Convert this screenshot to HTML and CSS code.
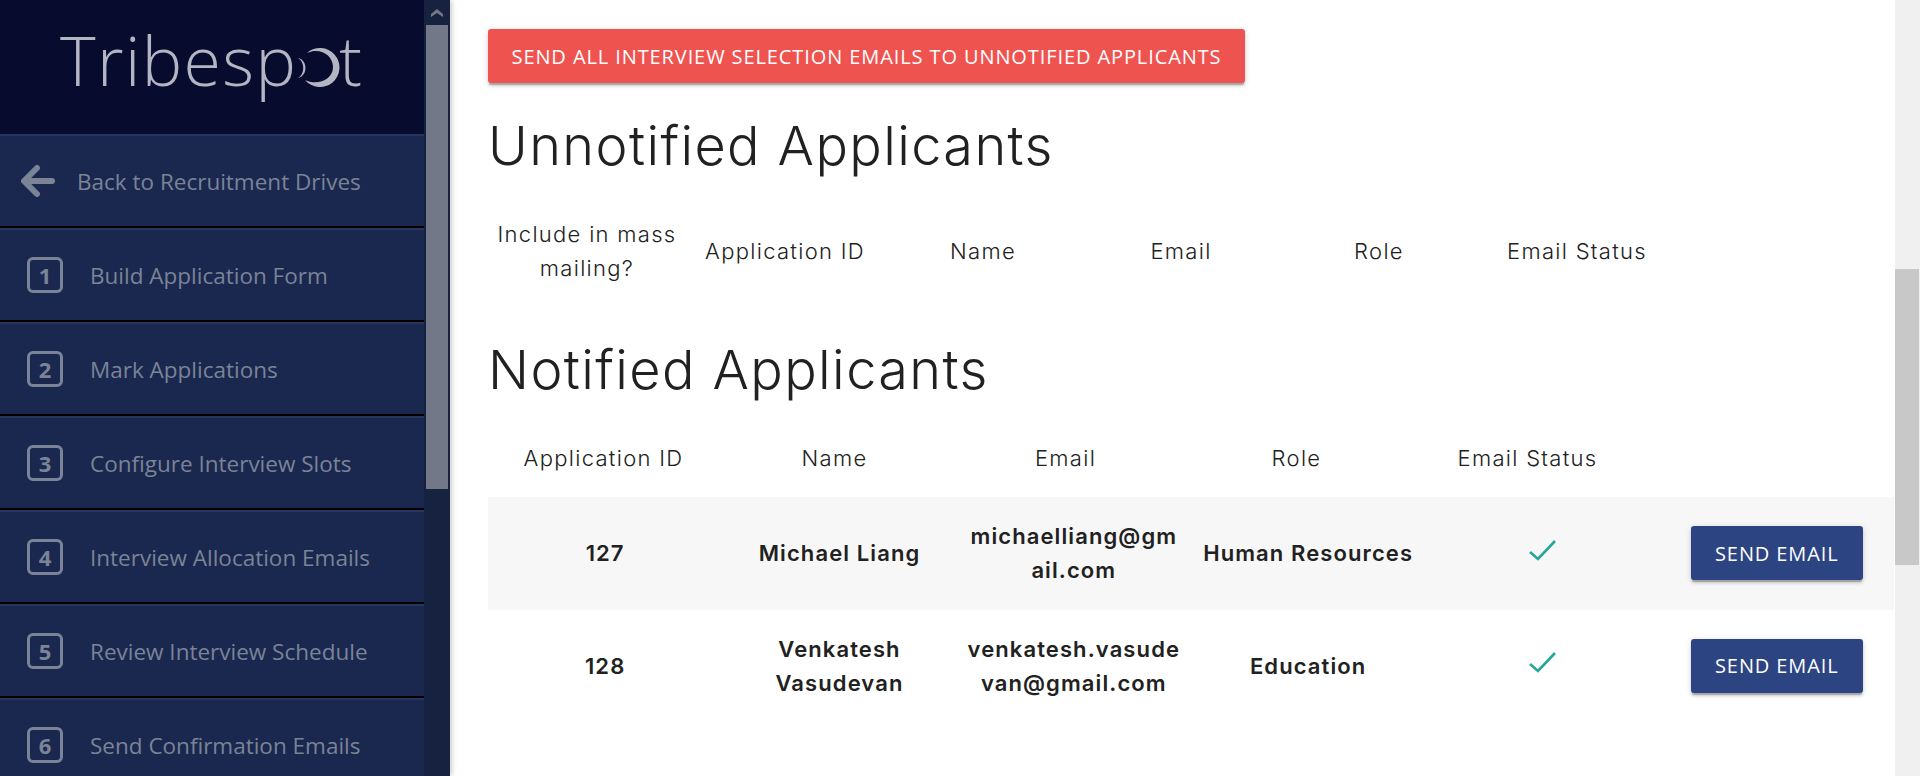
FILE: index.html
```html
<!DOCTYPE html>
<html lang="en">
<head>
    <meta charset="UTF-8">
    <title>Tribespot</title>
    <link rel="stylesheet" href="styles.css">
</head>
<body>
    <aside class="sidebar">
        <nav class="nav">
            <div class="logo">
                <span>Tribesp</span>
                <svg class="logo-moon" viewBox="0 0 44 44">
                    <path fill="currentColor" d="M11 7A19.5 19.5 0 1 1 9 34C21 40 37 34 37 21C37 9 24 1 11 7Z" />
                    <path fill="currentColor" d="M2 12C9 16 9 28 2 32C12 30 12 14 2 12Z" />
                </svg>
                <span>t</span>
            </div>
            <a class="nav-item nav-back">
                <svg class="back-arrow" viewBox="0 0 34 34">
                    <path fill="none" stroke="currentColor" stroke-width="6" stroke-linecap="round" stroke-linejoin="round" d="M31 17H4M16 4L3 17L16 30" />
                </svg>
                Back to Recruitment Drives
            </a>
            <a class="nav-item"><span class="step">1</span>Build Application Form</a>
            <a class="nav-item"><span class="step">2</span>Mark Applications</a>
            <a class="nav-item"><span class="step">3</span>Configure Interview Slots</a>
            <a class="nav-item"><span class="step">4</span>Interview Allocation Emails</a>
            <a class="nav-item"><span class="step">5</span>Review Interview Schedule</a>
            <a class="nav-item"><span class="step">6</span>Send Confirmation Emails</a>
        </nav>
        <div class="side-scroll">
            <svg class="side-scroll-up" viewBox="0 0 12 8">
                <path fill="currentColor" d="M6 0L12 5V8L6 4L0 8V5Z" />
            </svg>
            <div class="side-scroll-thumb"></div>
        </div>
    </aside>

    <main class="content">
        <button class="btn btn-red">Send all interview selection emails to unnotified applicants</button>

        <h2 class="heading heading-first">Unnotified Applicants</h2>
        <div class="head-row head-row-seven">
            <div>Include in mass<br>mailing?</div>
            <div>Application ID</div>
            <div>Name</div>
            <div>Email</div>
            <div>Role</div>
            <div>Email Status</div>
        </div>

        <h2 class="heading heading-second">Notified Applicants</h2>
        <div class="head-row head-row-six">
            <div>Application ID</div>
            <div>Name</div>
            <div>Email</div>
            <div>Role</div>
            <div>Email Status</div>
        </div>

        <div class="row row-odd">
            <div>127</div>
            <div>Michael Liang</div>
            <div>michaelliang@gm<br>ail.com</div>
            <div>Human Resources</div>
            <div class="status">
                <svg class="check" viewBox="0 0 28 22">
                    <path fill="none" stroke="currentColor" stroke-width="2.6" d="M1 12L9 19L26 1" />
                </svg>
            </div>
            <div><button class="btn btn-blue">Send email</button></div>
        </div>
        <div class="row">
            <div>128</div>
            <div>Venkatesh<br>Vasudevan</div>
            <div>venkatesh.vasude<br>van@gmail.com</div>
            <div>Education</div>
            <div class="status">
                <svg class="check" viewBox="0 0 28 22">
                    <path fill="none" stroke="currentColor" stroke-width="2.6" d="M1 12L9 19L26 1" />
                </svg>
            </div>
            <div><button class="btn btn-blue">Send email</button></div>
        </div>
    </main>

    <div class="page-scroll">
        <div class="page-scroll-thumb"></div>
    </div>
</body>
</html>
```

FILE: styles.css
```css
html, body {
    height: 100%;
}
body {
    margin: 0;
    display: flex;
    overflow: hidden;
    background-color: #fff;
    color: #212121;
    font-family: 'Inter', 'Liberation Sans', sans-serif;
}
.sidebar {
    width: 450px;
    flex-shrink: 0;
    display: flex;
    background-color: #172140;
    box-shadow: 2px 0 5px rgba(0, 0, 0, 0.2);
    overflow: hidden;
}
.nav {
    width: 424px;
    flex-shrink: 0;
    font-family: 'Open Sans', sans-serif;
    color: #7b8396;
}
.logo {
    height: 134px;
    box-sizing: border-box;
    padding: 13px 0 0 60px;
    display: flex;
    align-items: flex-start;
    background-color: #070b2e;
    color: #b4b5c3;
    font-size: 68px;
    font-weight: 300;
    letter-spacing: 1.4px;
    line-height: 94px;
}
.logo-moon {
    width: 44px;
    height: 44px;
    margin: 33px -1px 0 -1px;
    flex-shrink: 0;
}
.nav-item {
    height: 94px;
    box-sizing: border-box;
    display: flex;
    align-items: center;
    padding-left: 27px;
    background-color: #1a2850;
    border-top: 2px solid #26365f;
    border-bottom: 2px solid #000;
    font-size: 22.5px;
}
.nav-back {
    padding-left: 21px;
}
.back-arrow {
    width: 34px;
    height: 34px;
    margin-right: 22px;
}
.step {
    width: 36px;
    height: 36px;
    box-sizing: border-box;
    margin-right: 27px;
    border: 3px solid #7b8396;
    border-radius: 6px;
    display: flex;
    align-items: center;
    justify-content: center;
    font-size: 22px;
    font-weight: 700;
}
.side-scroll {
    flex: 1;
    padding: 0 2px;
}
.side-scroll-up {
    display: block;
    width: 12px;
    height: 8px;
    margin: 9px auto 8px;
    color: #737888;
}
.side-scroll-thumb {
    height: 464px;
    background-color: #737888;
}
.content {
    flex: 1;
    min-width: 0;
    padding: 29px 1px 0 38px;
}
.btn {
    height: 54px;
    border: none;
    border-radius: 3px;
    color: #fff;
    font-family: 'Open Sans', sans-serif;
    font-size: 20px;
    letter-spacing: 0.9px;
    text-transform: uppercase;
    box-shadow: 0 3px 3px 0 rgba(0, 0, 0, 0.14), 0 1px 7px 0 rgba(0, 0, 0, 0.12), 0 3px 1px -1px rgba(0, 0, 0, 0.2);
}
.btn-red {
    width: 757px;
    background-color: #ef5350;
    display: block;
}
.btn-blue {
    width: 172px;
    background-color: #2c4482;
}
.heading {
    margin: 0;
    font-size: 54px;
    font-weight: 300;
    letter-spacing: 1.4px;
    line-height: 70px;
}
.heading-first {
    margin-top: 28px;
}
.heading-second {
    margin-top: 50px;
}
.head-row {
    display: grid;
    align-items: center;
    text-align: center;
    font-size: 22px;
    font-weight: 300;
    letter-spacing: 1.3px;
    line-height: 34px;
}
.head-row-seven {
    grid-template-columns: repeat(7, 198px);
    margin-top: 36px;
    height: 68px;
}
.head-row-six {
    grid-template-columns: repeat(6, 231px);
    margin-top: 36px;
    height: 34px;
    padding-bottom: 22px;
}
.row {
    display: grid;
    grid-template-columns: repeat(6, 1fr);
    align-items: center;
    height: 112.5px;
    text-align: center;
    font-size: 22px;
    font-weight: 600;
    letter-spacing: 1.1px;
    line-height: 34px;
}
.row-odd {
    background-color: #f7f7f7;
}
.status {
    padding-left: 2px;
    color: #26a69a;
}
.check {
    display: block;
    width: 28px;
    height: 22px;
    margin: -5px auto 0;
}
.page-scroll {
    width: 25px;
    flex-shrink: 0;
    background-color: #f0f0f0;
    padding-top: 269px;
}
.page-scroll-thumb {
    width: 24px;
    height: 296px;
    background-color: #c8c8c8;
}
```
